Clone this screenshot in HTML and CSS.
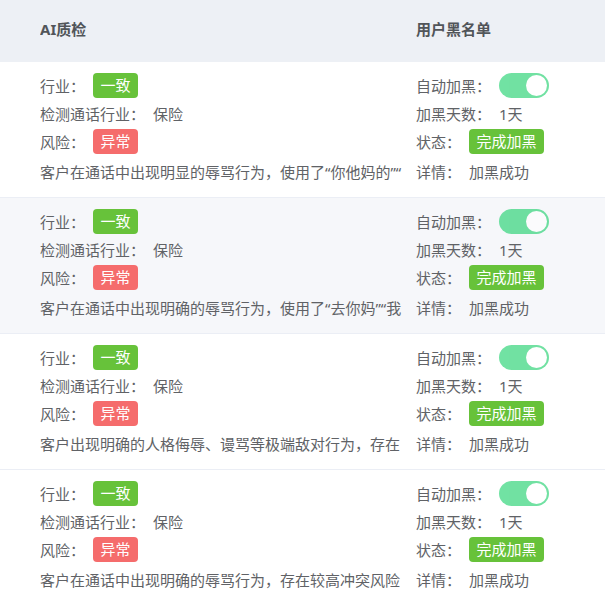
FILE: index.html
```html
<!DOCTYPE html>
<html lang="zh-CN">
<head>
    <meta charset="UTF-8">
    <meta name="viewport" content="width=device-width, initial-scale=1.0">
    <title>AI质检 / 用户黑名单</title>
    <link rel="stylesheet" href="styles.css">
</head>
<body>
    <div class="table">
        <div class="row head">
            <div class="cell">AI质检</div>
            <div class="cell">用户黑名单</div>
        </div>

        <div class="row">
            <div class="cell">
                <div class="line"><span class="label">行业：</span><span class="tag ok">一致</span></div>
                <div class="line"><span class="label">检测通话行业：</span><span>保险</span></div>
                <div class="line"><span class="label">风险：</span><span class="tag bad">异常</span></div>
                <div class="line desc">客户在通话中出现明显的辱骂行为，使用了“你他妈的”“</div>
            </div>
            <div class="cell">
                <div class="line"><span class="label">自动加黑：</span><span class="switch"><span class="knob"></span></span></div>
                <div class="line"><span class="label">加黑天数：</span><span>1天</span></div>
                <div class="line"><span class="label">状态：</span><span class="tag ok">完成加黑</span></div>
                <div class="line desc"><span class="label">详情：</span><span>加黑成功</span></div>
            </div>
        </div>

        <div class="row striped">
            <div class="cell">
                <div class="line"><span class="label">行业：</span><span class="tag ok">一致</span></div>
                <div class="line"><span class="label">检测通话行业：</span><span>保险</span></div>
                <div class="line"><span class="label">风险：</span><span class="tag bad">异常</span></div>
                <div class="line desc">客户在通话中出现明确的辱骂行为，使用了“去你妈”“我</div>
            </div>
            <div class="cell">
                <div class="line"><span class="label">自动加黑：</span><span class="switch"><span class="knob"></span></span></div>
                <div class="line"><span class="label">加黑天数：</span><span>1天</span></div>
                <div class="line"><span class="label">状态：</span><span class="tag ok">完成加黑</span></div>
                <div class="line desc"><span class="label">详情：</span><span>加黑成功</span></div>
            </div>
        </div>

        <div class="row">
            <div class="cell">
                <div class="line"><span class="label">行业：</span><span class="tag ok">一致</span></div>
                <div class="line"><span class="label">检测通话行业：</span><span>保险</span></div>
                <div class="line"><span class="label">风险：</span><span class="tag bad">异常</span></div>
                <div class="line desc">客户出现明确的人格侮辱、谩骂等极端敌对行为，存在</div>
            </div>
            <div class="cell">
                <div class="line"><span class="label">自动加黑：</span><span class="switch"><span class="knob"></span></span></div>
                <div class="line"><span class="label">加黑天数：</span><span>1天</span></div>
                <div class="line"><span class="label">状态：</span><span class="tag ok">完成加黑</span></div>
                <div class="line desc"><span class="label">详情：</span><span>加黑成功</span></div>
            </div>
        </div>

        <div class="row">
            <div class="cell">
                <div class="line"><span class="label">行业：</span><span class="tag ok">一致</span></div>
                <div class="line"><span class="label">检测通话行业：</span><span>保险</span></div>
                <div class="line"><span class="label">风险：</span><span class="tag bad">异常</span></div>
                <div class="line desc">客户在通话中出现明确的辱骂行为，存在较高冲突风险</div>
            </div>
            <div class="cell">
                <div class="line"><span class="label">自动加黑：</span><span class="switch"><span class="knob"></span></span></div>
                <div class="line"><span class="label">加黑天数：</span><span>1天</span></div>
                <div class="line"><span class="label">状态：</span><span class="tag ok">完成加黑</span></div>
                <div class="line desc"><span class="label">详情：</span><span>加黑成功</span></div>
            </div>
        </div>
    </div>
</body>
</html>
```

FILE: styles.css
```css
body {
    margin: 0;
    font-family: "Noto Sans", "Noto Sans CJK SC", sans-serif;
    font-size: 15px;
    color: #606266;
    background: #fff;
}
.table {
    width: 605px;
}
.row {
    display: grid;
    grid-template-columns: 362px 1fr;
    column-gap: 14px;
    padding: 9px 0 12px 40px;
    border-bottom: 1px solid #ebeef5;
}
.row.striped {
    background-color: #f6f7fa;
}
.row.head {
    height: 62px;
    box-sizing: border-box;
    padding: 0 0 6px 40px;
    align-items: center;
    background-color: #edf0f5;
    border-bottom: none;
    font-weight: bold;
    color: #515559;
}
.cell {
    overflow: hidden;
    white-space: nowrap;
}
.line {
    height: 28px;
    display: flex;
    align-items: center;
}
.line.desc {
    margin-top: 2px;
}
.label {
    margin-right: 8px;
}
.tag {
    display: inline-block;
    height: 25px;
    line-height: 25px;
    padding: 0 7.5px;
    border-radius: 4px;
    color: #fff;
}
.tag.ok {
    background-color: #67c23a;
}
.tag.bad {
    background-color: #f56c6c;
}
.switch {
    position: relative;
    display: inline-block;
    width: 50px;
    height: 25px;
    border-radius: 13px;
    background-color: #13ce66;
    opacity: 0.6;
}
.knob {
    position: absolute;
    top: 2px;
    right: 2px;
    width: 21px;
    height: 21px;
    border-radius: 50%;
    background-color: #fff;
}
```
